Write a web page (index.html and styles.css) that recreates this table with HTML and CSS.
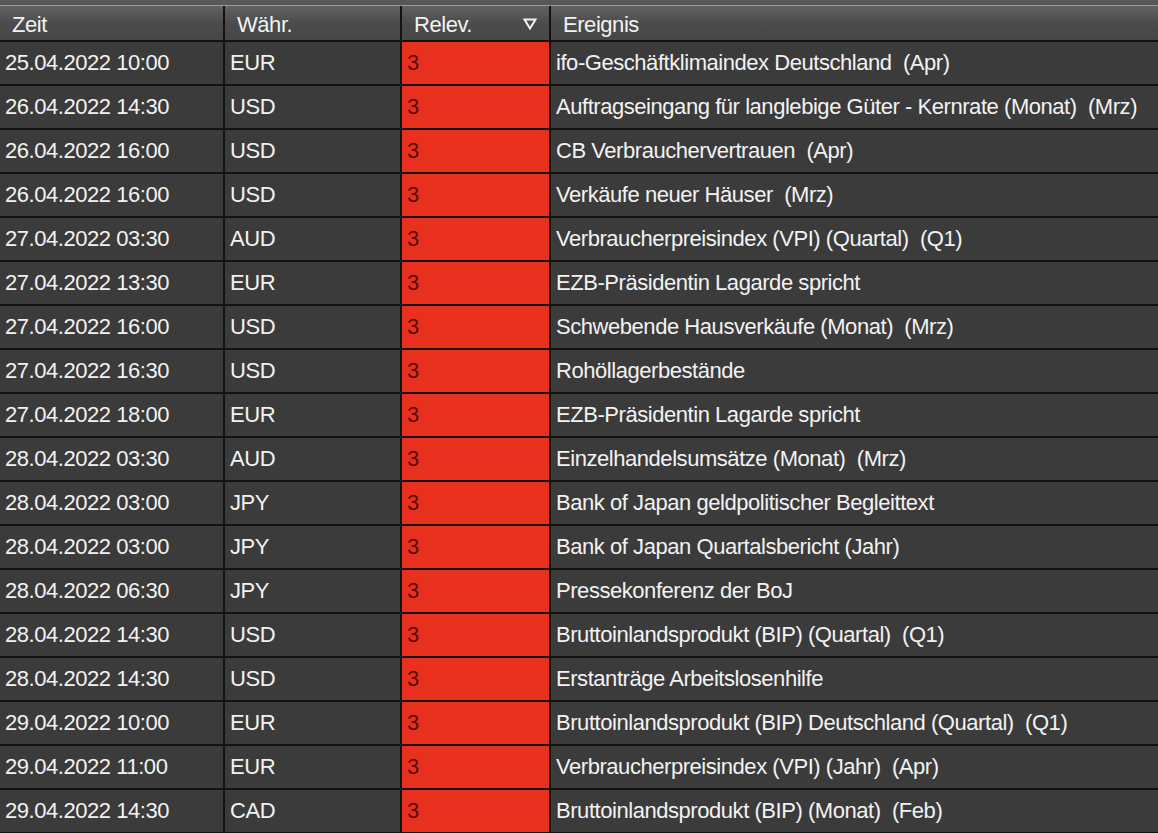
FILE: index.html
```html
<!DOCTYPE html>
<html lang="de">
<head>
<meta charset="utf-8">
<title>Wirtschaftskalender</title>
<link rel="stylesheet" href="styles.css">
</head>
<body>
<div class="grid">
  <div class="topbar"></div>
  <div class="row head">
    <div class="cell">Zeit</div>
    <div class="cell">Währ.</div>
    <div class="cell sort">Relev.<svg class="tri" width="14" height="12" viewBox="0 0 14 12"><path d="M1.5 1.5 H12.5 L7 10.5 Z" fill="none" stroke="#f2f2f2" stroke-width="2" stroke-linejoin="miter"/></svg></div>
    <div class="cell">Ereignis</div>
  </div>
  <div class="row"><div class="cell">25.04.2022 10:00</div><div class="cell">EUR</div><div class="cell rel">3</div><div class="cell">ifo-Geschäftklimaindex Deutschland&nbsp; (Apr)</div></div>
  <div class="row"><div class="cell">26.04.2022 14:30</div><div class="cell">USD</div><div class="cell rel">3</div><div class="cell">Auftragseingang für langlebige Güter - Kernrate (Monat)&nbsp; (Mrz)</div></div>
  <div class="row"><div class="cell">26.04.2022 16:00</div><div class="cell">USD</div><div class="cell rel">3</div><div class="cell">CB Verbrauchervertrauen&nbsp; (Apr)</div></div>
  <div class="row"><div class="cell">26.04.2022 16:00</div><div class="cell">USD</div><div class="cell rel">3</div><div class="cell">Verkäufe neuer Häuser&nbsp; (Mrz)</div></div>
  <div class="row"><div class="cell">27.04.2022 03:30</div><div class="cell">AUD</div><div class="cell rel">3</div><div class="cell">Verbraucherpreisindex (VPI) (Quartal)&nbsp; (Q1)</div></div>
  <div class="row"><div class="cell">27.04.2022 13:30</div><div class="cell">EUR</div><div class="cell rel">3</div><div class="cell">EZB-Präsidentin Lagarde spricht</div></div>
  <div class="row"><div class="cell">27.04.2022 16:00</div><div class="cell">USD</div><div class="cell rel">3</div><div class="cell">Schwebende Hausverkäufe (Monat)&nbsp; (Mrz)</div></div>
  <div class="row"><div class="cell">27.04.2022 16:30</div><div class="cell">USD</div><div class="cell rel">3</div><div class="cell">Rohöllagerbestände</div></div>
  <div class="row"><div class="cell">27.04.2022 18:00</div><div class="cell">EUR</div><div class="cell rel">3</div><div class="cell">EZB-Präsidentin Lagarde spricht</div></div>
  <div class="row"><div class="cell">28.04.2022 03:30</div><div class="cell">AUD</div><div class="cell rel">3</div><div class="cell">Einzelhandelsumsätze (Monat)&nbsp; (Mrz)</div></div>
  <div class="row"><div class="cell">28.04.2022 03:00</div><div class="cell">JPY</div><div class="cell rel">3</div><div class="cell">Bank of Japan geldpolitischer Begleittext</div></div>
  <div class="row"><div class="cell">28.04.2022 03:00</div><div class="cell">JPY</div><div class="cell rel">3</div><div class="cell">Bank of Japan Quartalsbericht (Jahr)</div></div>
  <div class="row"><div class="cell">28.04.2022 06:30</div><div class="cell">JPY</div><div class="cell rel">3</div><div class="cell">Pressekonferenz der BoJ</div></div>
  <div class="row"><div class="cell">28.04.2022 14:30</div><div class="cell">USD</div><div class="cell rel">3</div><div class="cell">Bruttoinlandsprodukt (BIP) (Quartal)&nbsp; (Q1)</div></div>
  <div class="row"><div class="cell">28.04.2022 14:30</div><div class="cell">USD</div><div class="cell rel">3</div><div class="cell">Erstanträge Arbeitslosenhilfe</div></div>
  <div class="row"><div class="cell">29.04.2022 10:00</div><div class="cell">EUR</div><div class="cell rel">3</div><div class="cell">Bruttoinlandsprodukt (BIP) Deutschland (Quartal)&nbsp; (Q1)</div></div>
  <div class="row"><div class="cell">29.04.2022 11:00</div><div class="cell">EUR</div><div class="cell rel">3</div><div class="cell">Verbraucherpreisindex (VPI) (Jahr)&nbsp; (Apr)</div></div>
  <div class="row"><div class="cell">29.04.2022 14:30</div><div class="cell">CAD</div><div class="cell rel">3</div><div class="cell">Bruttoinlandsprodukt (BIP) (Monat)&nbsp; (Feb)</div></div>
</div>
</body>
</html>
```

FILE: styles.css
```css
html, body {
  margin: 0;
  padding: 0;
  background: #3b3b3b;
  overflow: hidden;
}
.grid {
  width: 1158px;
  height: 833px;
  overflow: hidden;
  font-family: "Liberation Sans", Arial, sans-serif;
  font-size: 22px;
  color: #f2f2f2;
  letter-spacing: -0.45px;
}
.topbar {
  height: 5px;
  background: #575757;
  border-bottom: 1px solid #9a9a9a;
}
.row {
  display: grid;
  grid-template-columns: 225px 177px 149px 1fr;
  height: 44px;
  box-sizing: border-box;
  border-bottom: 2px solid #121212;
  background: #3b3b3b;
}
.row.head {
  height: 36px;
  background: linear-gradient(#626262, #4c4c4c 50%, #464646);
  border-bottom: 2px solid #121212;
}
.cell {
  display: flex;
  align-items: center;
  padding-left: 5px;
  border-right: 2px solid #121212;
  white-space: nowrap;
  overflow: hidden;
}
.cell:last-child {
  border-right: none;
}
.head .cell {
  padding-left: 12px;
  padding-top: 4px;
}
.sort {
  justify-content: space-between;
  padding-right: 12px;
}
.tri {
  margin-top: -2px;
}
.rel {
  background: #e8301f;
  color: #5e0804;
  padding-left: 5px;
}
```
